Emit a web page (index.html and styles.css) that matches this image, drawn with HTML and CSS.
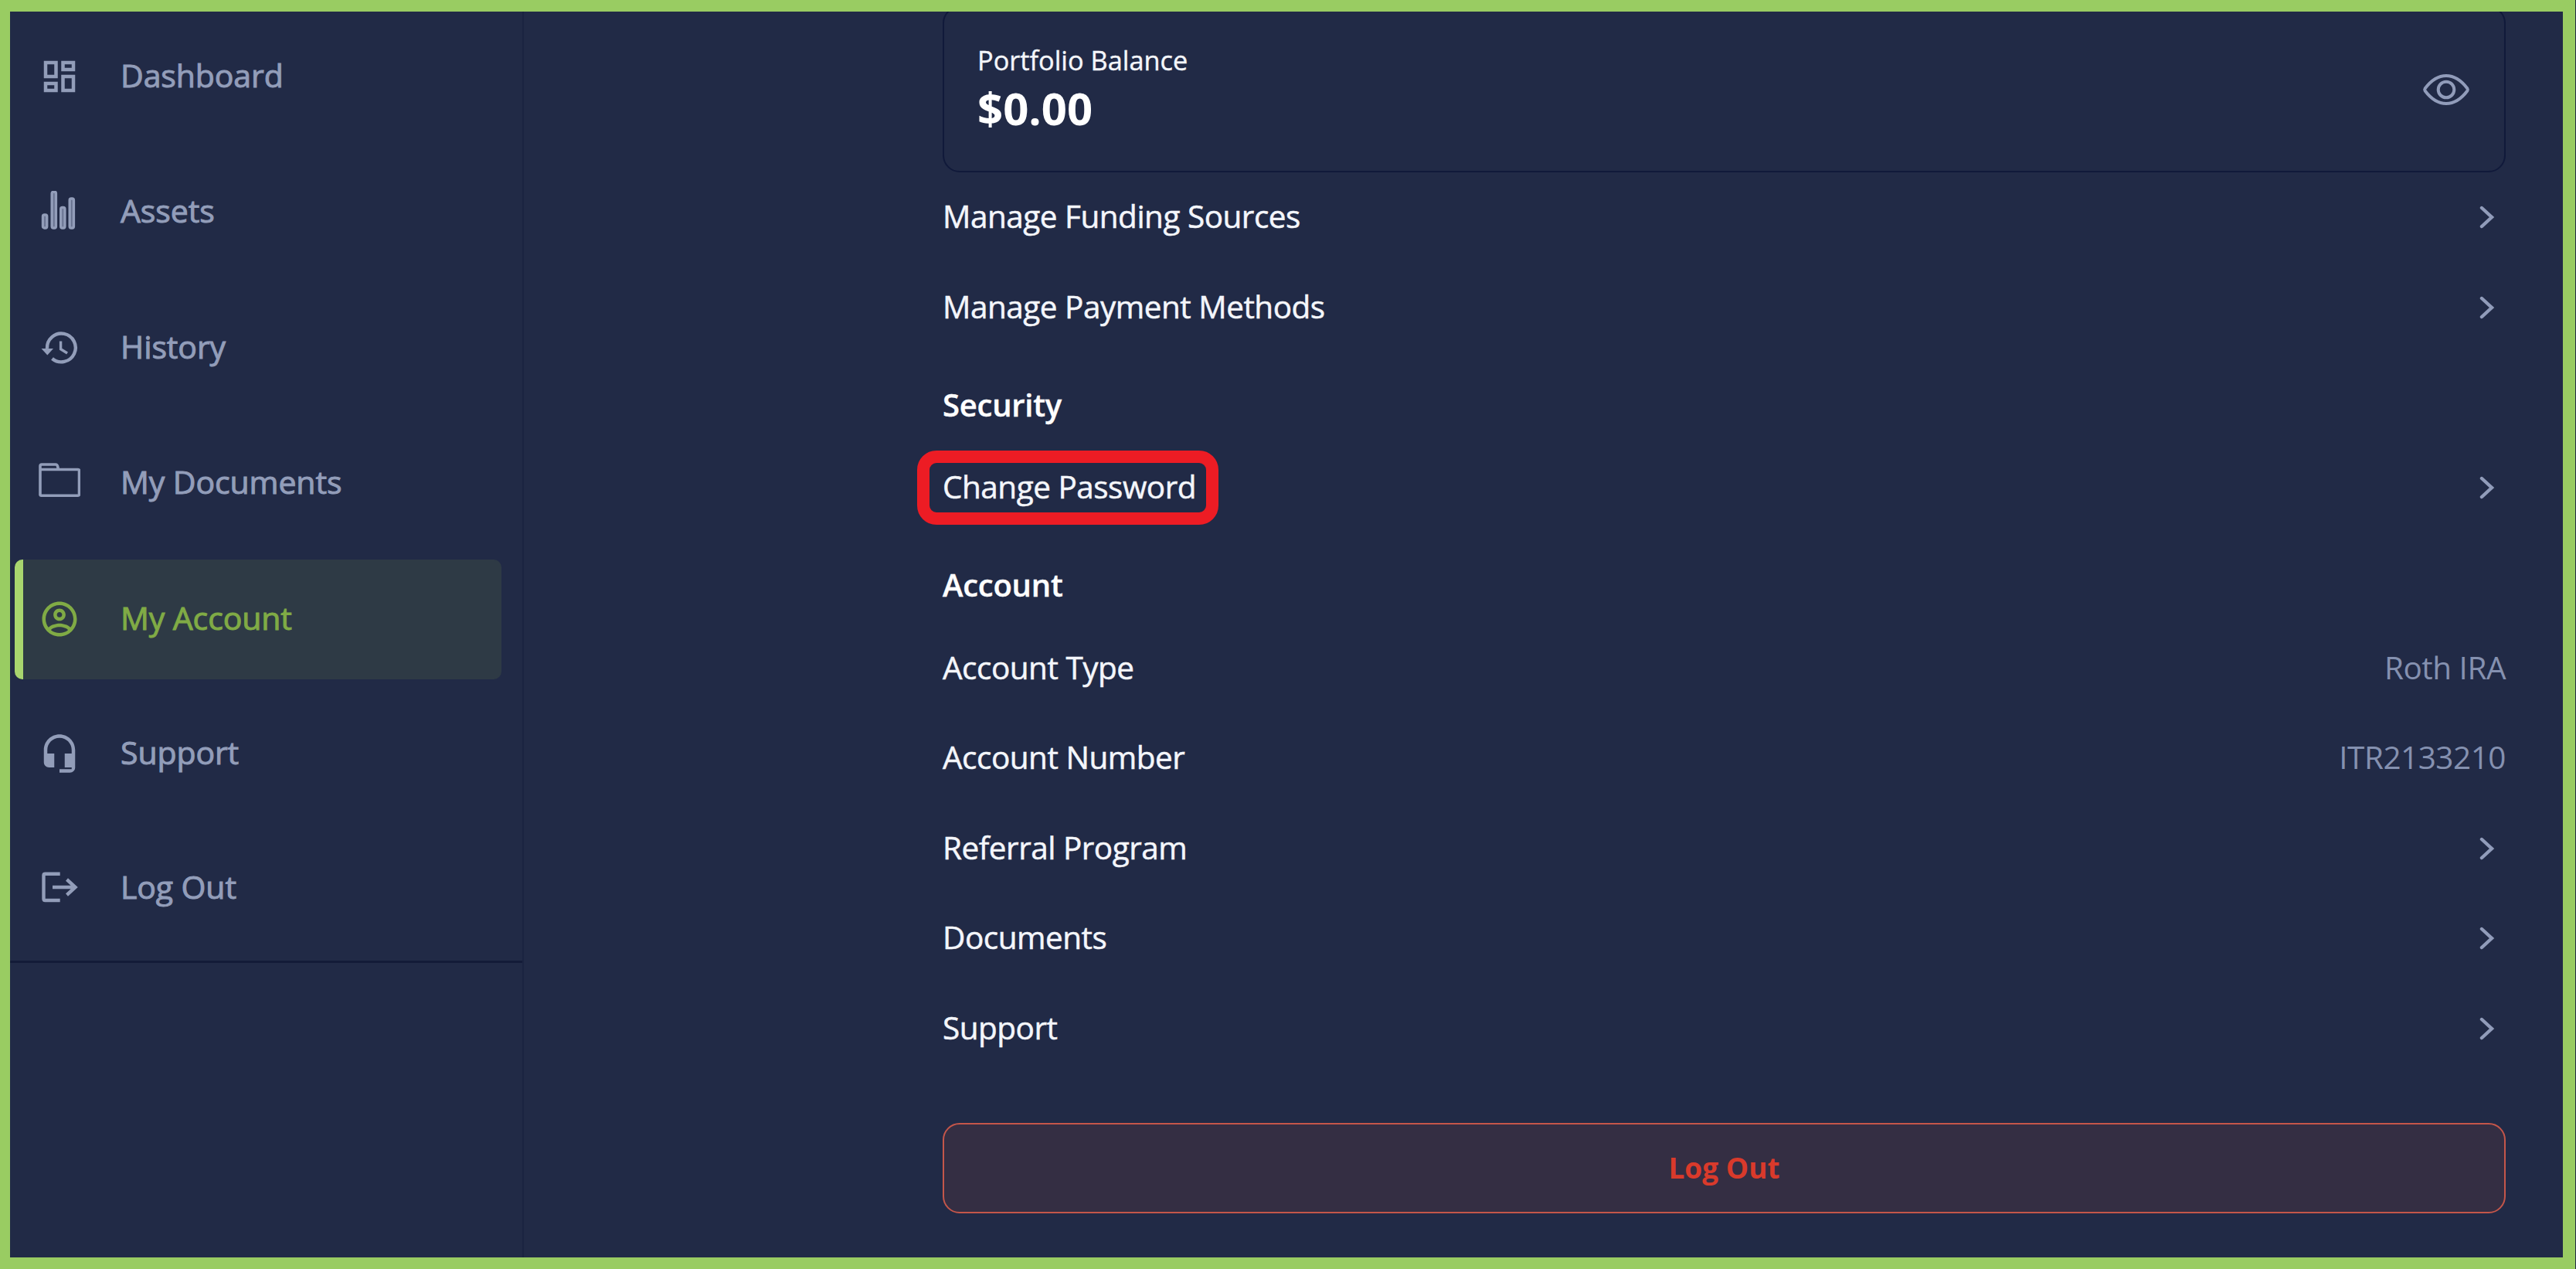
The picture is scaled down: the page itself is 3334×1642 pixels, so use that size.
FILE: index.html
```html
<!DOCTYPE html>
<html lang="en">
<head>
<meta charset="utf-8">
<title>My Account</title>
<link rel="stylesheet" href="styles.css">
</head>
<body>
<div class="frame">
  <aside class="sidebar">
    <nav class="nav">
      <a class="nav-item">
        <svg class="nav-icon" viewBox="0 0 24 24"><path d="M19 5v2h-4V5h4M9 5v6H5V5h4m10 8v6h-4v-6h4M9 17v2H5v-2h4M21 3h-8v6h8V3zM11 3H3v10h8V3zm10 8h-8v10h8V11zm-10 4H3v6h8v-6z"/></svg>
        <span>Dashboard</span>
      </a>
      <a class="nav-item">
        <svg class="nav-icon line bars" viewBox="0 1 54 54"><rect x="5.500" y="32" width="5.200" height="17" rx="2"/><rect x="17.200" y="2.2" width="5.200" height="46.800" rx="2"/><rect x="28.700" y="22.500" width="5.200" height="26.500" rx="2"/><rect x="40.200" y="11" width="5.200" height="38" rx="2"/></svg>
        <span>Assets</span>
      </a>
      <a class="nav-item">
        <svg class="nav-icon line" viewBox="0 0 54 54"><path d="M11 28A18.400 18.400 0 1 1 17.500 41"/><path class="solid" d="M3.500 28h15.500l-7.700 8.500z"/><path class="hands" d="M28.600 18.500v10.300l8.500 5.200"/></svg>
        <span>History</span>
      </a>
      <a class="nav-item">
        <svg class="nav-icon line thin" viewBox="0 0 54 54"><path d="M2 43V5q0-2 2-2h18q2 0 2.600 2.500L25.500 9.500H51q1.500 0 1.500 1.500V41.500q0 1.700-1.700 1.700H3.500Q2 43.200 2 41.500M2 9.500H25.500"/></svg>
        <span>My Documents</span>
      </a>
      <a class="nav-item active">
        <svg class="nav-icon" viewBox="0 0 24 24"><path d="M12 2C6.480 2 2 6.480 2 12s4.480 10 10 10 10-4.480 10-10S17.520 2 12 2zM7.070 18.280c.43-.9 3.050-1.780 4.930-1.780s4.510.88 4.930 1.780C15.570 19.360 13.860 20 12 20s-3.570-.64-4.930-1.720zm11.290-1.450c-1.430-1.740-4.900-2.330-6.360-2.330s-4.930.59-6.360 2.330C4.620 15.490 4 13.820 4 12c0-4.410 3.590-8 8-8s8 3.590 8 8c0 1.820-.62 3.490-1.640 4.830zM12 6c-1.940 0-3.500 1.560-3.500 3.500S10.060 13 12 13s3.500-1.560 3.500-3.500S13.940 6 12 6zm0 5c-.83 0-1.500-.67-1.500-1.500S11.170 8 12 8s1.500.67 1.500 1.500S12.830 11 12 11z"/></svg>
        <span>My Account</span>
      </a>
      <a class="nav-item">
        <svg class="nav-icon" viewBox="0 0 24 24"><path d="M12 1c-4.970 0-9 4.030-9 9v7c0 1.660 1.340 3 3 3h3v-8H5v-2c0-3.870 3.130-7 7-7s7 3.130 7 7v2h-4v8h4v1h-7v2h6c1.660 0 3-1.340 3-3V10c0-4.970-4.030-9-9-9z"/></svg>
        <span>Support</span>
      </a>
      <a class="nav-item">
        <svg class="nav-icon line" viewBox="0 0 54 54"><path d="M27.700 8.800H8.500Q6.500 8.800 6.500 10.800V41Q6.500 43 8.500 43H27.700M18 26H47M36.500 16L47.500 26L36.500 36"/></svg>
        <span>Log Out</span>
      </a>
    </nav>
  </aside>
  <main class="main">
    <section class="balance">
      <div class="balance-text">
        <div class="balance-label">Portfolio Balance</div>
        <div class="balance-value">$0.00</div>
      </div>
      <svg class="eye" viewBox="0 0 62 44"><path d="M3.600 20.500Q16 4 31 4T58.400 20.500Q59.400 22 58.400 23.500Q46 40 31 40T3.600 23.500Q2.600 22 3.600 20.500Z"/><circle cx="31" cy="22" r="10.300"/></svg>
    </section>
    <div class="list">
      <a class="row"><span>Manage Funding Sources</span><svg class="chevron" viewBox="0 0 20 30"><path d="M3 3L16 15L3 27"/></svg></a>
      <a class="row"><span>Manage Payment Methods</span><svg class="chevron" viewBox="0 0 20 30"><path d="M3 3L16 15L3 27"/></svg></a>
      <h2 class="title">Security</h2>
      <a class="row"><span class="highlight">Change Password</span><svg class="chevron" viewBox="0 0 20 30"><path d="M3 3L16 15L3 27"/></svg></a>
      <h2 class="title">Account</h2>
      <div class="row"><span>Account Type</span><span class="value">Roth IRA</span></div>
      <div class="row"><span>Account Number</span><span class="value">ITR2133210</span></div>
      <a class="row"><span>Referral Program</span><svg class="chevron" viewBox="0 0 20 30"><path d="M3 3L16 15L3 27"/></svg></a>
      <a class="row"><span>Documents</span><svg class="chevron" viewBox="0 0 20 30"><path d="M3 3L16 15L3 27"/></svg></a>
      <a class="row"><span>Support</span><svg class="chevron" viewBox="0 0 20 30"><path d="M3 3L16 15L3 27"/></svg></a>
    </div>
    <button class="logout">Log Out</button>
  </main>
</div>
</body>
</html>
```
FILE: styles.css
```css
* { box-sizing: border-box; }

body {
  margin: 0;
  background: #212a46;
  font-family: "Open Sans", "Noto Sans", sans-serif;
  font-size: 40.5px;
  color: #f4f6fb;
}

.frame {
  display: flex;
  width: 3333px;
  height: 1642px;
  border: solid #99cc62;
  border-width: 15px 16px 15px 13px;
  background: #212a46;
  overflow: hidden;
}

.sidebar {
  width: 665px;
  border-right: 2px solid #1a2340;
}

.nav {
  display: flex;
  flex-direction: column;
  gap: 20.6px;
  height: 1231px;
  padding: 6.2px 27px 0 6px;
  border-bottom: 3px solid #131b38;
}

.nav-item {
  display: flex;
  flex: none;
  align-items: center;
  height: 155px;
  padding-left: 31px;
  gap: 52px;
  border-radius: 10px;
  color: #929db9;
  font-size: 41px;
  font-weight: 500;
  letter-spacing: -0.1px;
  -webkit-text-stroke: 1px currentColor;
}

.nav-item span { padding-bottom: 4px; }

.nav-item.active {
  border-left: 11px solid #a8d56e;
  padding-left: 20px;
  background: #2e3a45;
  color: #80ab45;
}

.nav-item.active ~ .nav-item { margin-top: -1.8px; }

.nav-icon {
  flex: none;
  width: 54px;
  height: 54px;
  fill: currentColor;
}

.line {
  fill: none;
  stroke: currentColor;
  stroke-width: 4.4;
}

.thin { stroke-width: 3.6; }
.hands { stroke-width: 3.4; }

.bars {
  fill: #67718f;
  stroke-width: 3.4;
}

.solid {
  fill: currentColor;
  stroke: none;
}

.main {
  flex: 1;
  padding: 0 74px 0 542px;
}

.balance {
  display: flex;
  justify-content: space-between;
  align-items: center;
  height: 215px;
  margin-top: -7px;
  padding: 0 44px 0 43px;
  border: 2px solid #10193a;
  border-radius: 22px;
}

.balance-text { padding-top: 3px; }

.balance-label {
  font-size: 34.3px;
  line-height: 46px;
  -webkit-text-stroke: 0.4px currentColor;
}

.balance-value {
  font-size: 58px;
  font-weight: 700;
  line-height: 78px;
  color: #fff;
}

.eye {
  width: 62px;
  height: 44px;
  fill: none;
  stroke: #919cba;
  stroke-width: 4;
}

.list { margin-top: -1.5px; }

.row {
  display: flex;
  align-items: center;
  justify-content: space-between;
  height: 116.5px;
  letter-spacing: -0.5px;
  -webkit-text-stroke: 0.5px currentColor;
}

.value {
  color: #8591b0;
  -webkit-text-stroke: 0;
}

.chevron {
  width: 20px;
  height: 30px;
  margin: 3px 14px 0 0;
  fill: none;
  stroke: #919cba;
  stroke-width: 4.4;
  stroke-linecap: round;
}

.title {
  margin: 21px 0 0;
  font-size: 40px;
  font-weight: 600;
  line-height: 96px;
  letter-spacing: -0.25px;
  color: #fff;
  -webkit-text-stroke: 0.4px currentColor;
}

.highlight {
  display: flex;
  align-items: center;
  height: 96px;
  width: 390px;
  margin: 3px 0 0 -33px;
  padding: 0 0 3px 17px;
  border: 16px solid #ed1c24;
  border-radius: 25px;
  white-space: nowrap;
}

.logout {
  display: block;
  width: 100%;
  height: 117px;
  margin-top: 65.5px;
  padding: 0 0 2px;
  border: 2px solid #c4564a;
  border-radius: 22px;
  background: #342e43;
  color: #d93a2b;
  font: 700 37px "Open Sans", sans-serif;
}
```
